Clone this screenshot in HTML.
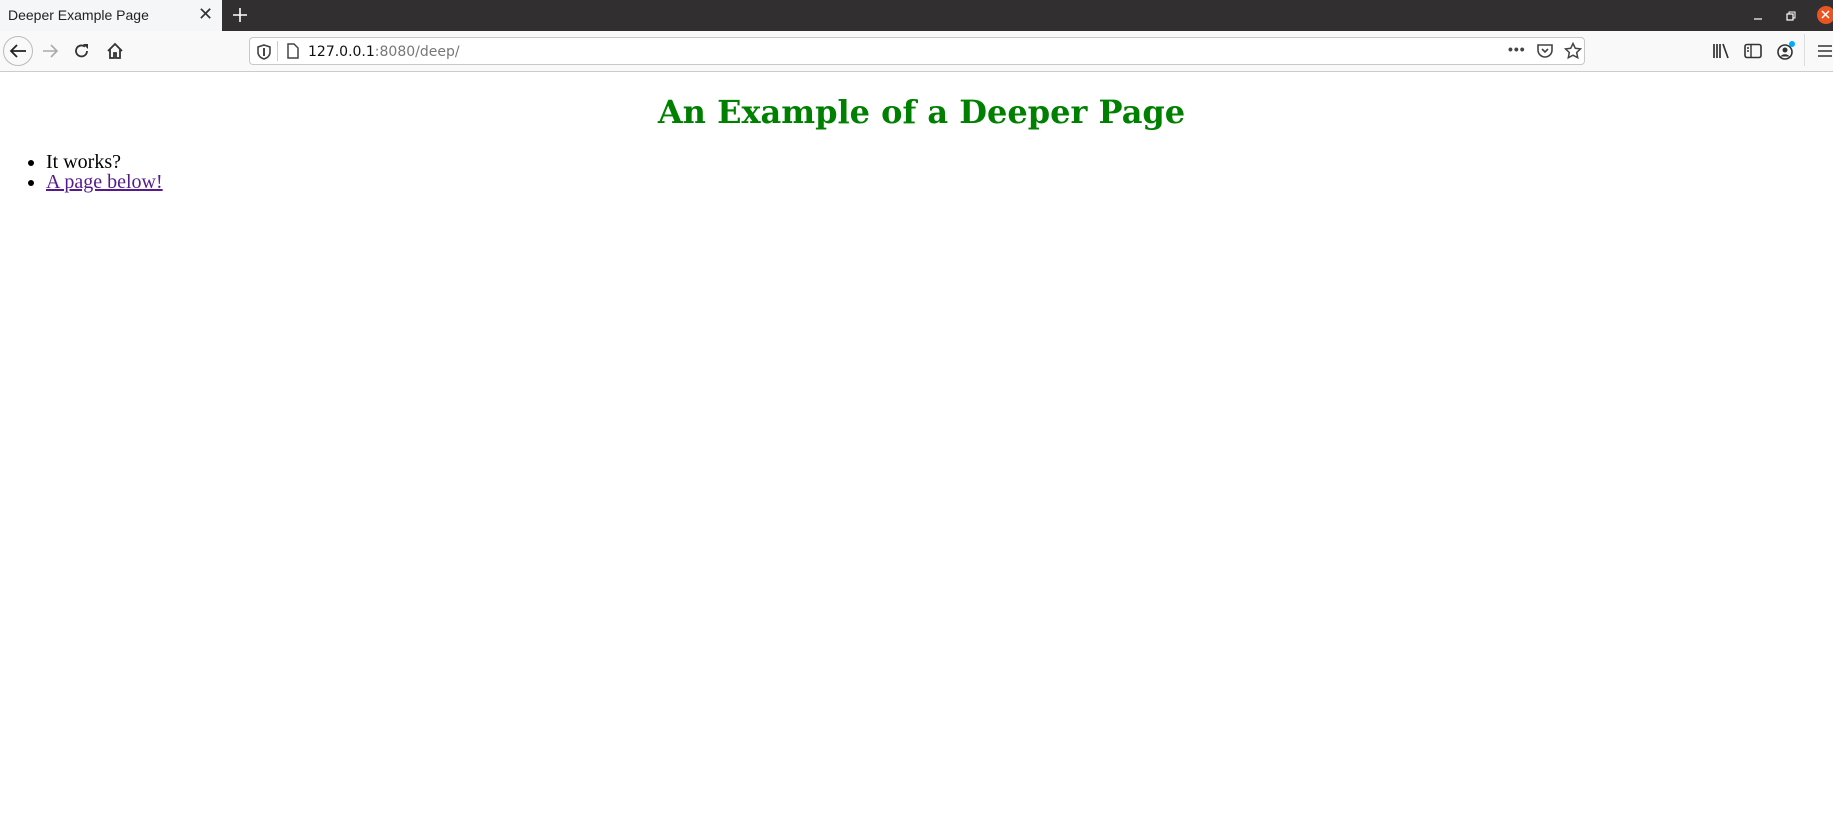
<!DOCTYPE html>
<html><head><meta charset="utf-8"><style>
body{margin:0;width:1833px;height:838px;overflow:hidden;background:#fff;font-family:"Liberation Serif",serif;position:relative}
.tabs{position:absolute;left:0;top:0;width:1833px;height:31px;background:#312f30}
.tab{position:absolute;left:0;top:0;width:222px;height:31px;background:#f5f6f7;font:14px "Liberation Sans",sans-serif;color:#222}
.tb{position:absolute;left:0;top:31px;width:1833px;height:40px;background:#f9f9fa;border-bottom:1px solid #ccc}
.url{position:absolute;left:249px;top:6px;width:1336px;height:28px;border:1px solid #c8c8c8;border-radius:4px;background:#fff;box-sizing:border-box}
.ut{position:absolute;left:308px;font:14px "DejaVu Sans","Liberation Sans",sans-serif;color:#111}
svg{position:absolute}
h1{position:absolute;left:5px;top:93px;width:1833px;margin:0;text-align:center;font:bold 32px/38px "DejaVu Serif",serif;color:#008000}
ul{position:absolute;left:46px;top:152px;margin:0;padding:0;font-size:20px;line-height:20px}
li{list-style:disc}
a{color:#551a8b}
</style></head><body>
<div class="tabs">
 <div class="tab"><span style="position:absolute;left:8px;top:7px">Deeper Example Page</span>
 <span style="position:absolute;left:198px;top:4px;font-size:18px;color:#333">✕</span></div>
 <svg style="left:231px;top:6px" width="18" height="18"><path d="M9 2v14M2 9h14" stroke="#fff" stroke-width="1.6"/></svg>
 <svg style="left:1752px;top:10px" width="14" height="12"><path d="M2 9h8" stroke="#fff" stroke-width="1.2"/></svg>
 <svg style="left:1785px;top:10px" width="12" height="12"><rect x="2" y="4" width="6" height="6" fill="none" stroke="#fff" stroke-width="1.2"/><path d="M4 4V2h6v6H8" fill="none" stroke="#fff" stroke-width="1"/></svg>
 <svg style="left:1817px;top:5px" width="16" height="22"><circle cx="9" cy="10" r="9" fill="#e95420"/><path d="M5 6l7 7M12 6l-7 7" stroke="#fff" stroke-width="1.5"/></svg>
</div>
<div class="tb">
 <svg style="left:2px;top:4px" width="32" height="32"><circle cx="16" cy="16" r="14.5" fill="none" stroke="#bbb"/><path d="M24 16H9M15 10l-6 6 6 6" fill="none" stroke="#222" stroke-width="1.8"/></svg>
 <svg style="left:40px;top:11px" width="20" height="18"><path d="M17 9H3M11 3l6 6-6 6" fill="none" stroke="#aaa" stroke-width="1.6"/></svg>
 <svg style="left:73px;top:11px" width="18" height="18"><path d="M14 9a5.5 5.5 0 1 1-2-4.3" fill="none" stroke="#333" stroke-width="1.8"/><path d="M10 2h5v5z" fill="#333"/></svg>
 <svg style="left:106px;top:11px" width="18" height="18"><path d="M2 9l7-7 7 7M4 7v9h4v-5h2v5h4V7" fill="none" stroke="#333" stroke-width="1.8"/></svg>
 <div class="url">
  <svg style="left:7px;top:6px" width="14" height="16"><path d="M7 1l6 2v5c0 4-3 6-6 7-3-1-6-3-6-7V3z" fill="none" stroke="#444" stroke-width="1.6"/><path d="M7 4v8" stroke="#444" stroke-width="2"/></svg>
  <div style="position:absolute;left:27px;top:3px;width:1px;height:20px;background:#ccc"></div>
  <svg style="left:36px;top:5px" width="14" height="17"><path d="M2 1h6l4 4v10H2z" fill="none" stroke="#444" stroke-width="1.5"/></svg>
  <span style="position:absolute;left:1258px;top:3px;font:bold 14px sans-serif;color:#444;letter-spacing:1px">•••</span>
  <svg style="left:1286px;top:5px" width="18" height="16"><path d="M2 2h14v5a7 7 0 0 1-14 0z" fill="none" stroke="#444" stroke-width="1.6"/><path d="M6 6l3 3 3-3" fill="none" stroke="#444" stroke-width="1.6"/></svg>
  <svg style="left:1314px;top:4px" width="18" height="18"><path d="M9 1.5l2.3 4.8 5.2.6-3.8 3.6 1 5.2L9 13.2l-4.7 2.5 1-5.2L1.5 6.9l5.2-.6z" fill="none" stroke="#444" stroke-width="1.5"/></svg>
 </div>
 <div class="ut" style="top:13px">127.0.0.1<span style="color:#777">:8080/deep/</span></div>
 <svg style="left:1712px;top:12px" width="18" height="16"><path d="M2 1v14M5 1v14M8 1v14M11 1l5 14" stroke="#333" stroke-width="1.7"/></svg>
 <svg style="left:1744px;top:12px" width="18" height="16"><rect x="1" y="1.5" width="16" height="13" rx="2" fill="none" stroke="#333" stroke-width="1.6"/><path d="M7 2v12M3 5h2M3 8h2" stroke="#333" stroke-width="1.4"/></svg>
 <svg style="left:1776px;top:8px" width="22" height="22"><circle cx="9" cy="13" r="7" fill="none" stroke="#333" stroke-width="1.6"/><circle cx="9" cy="11" r="2.5" fill="#333"/><path d="M4.5 17.5a5 4 0 0 1 9 0" fill="#333"/><circle cx="16" cy="5" r="3" fill="#0af"/></svg>
 <div style="position:absolute;left:1804px;top:3px;width:1px;height:32px;background:#ddd"></div>
 <svg style="left:1818px;top:13px" width="15" height="14"><path d="M0 2h14M0 7h14M0 12h14" stroke="#333" stroke-width="1.6"/></svg>
</div>
<h1>An Example of a Deeper Page</h1>
<ul><li>It works?</li><li><a href="#">A page below!</a></li></ul>
</body></html>
